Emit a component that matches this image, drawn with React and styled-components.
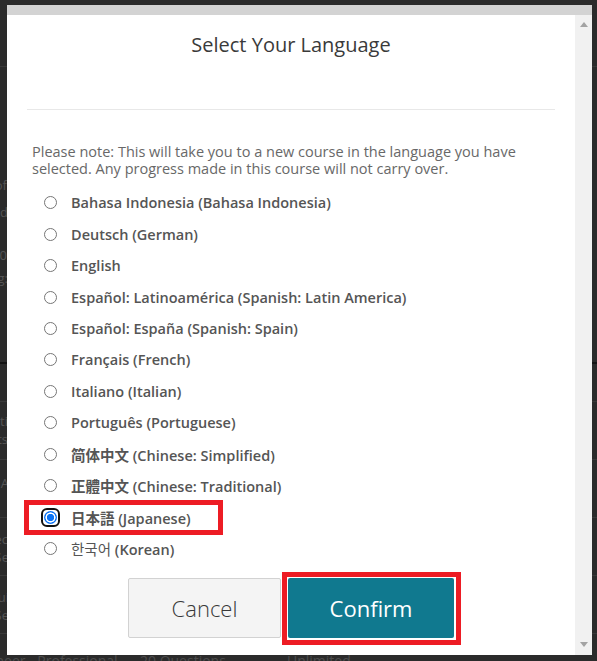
import React from "react";
import styled, { createGlobalStyle } from "styled-components";

const GlobalStyle = createGlobalStyle`
  html, body { margin: 0; padding: 0; background: #2b2b2b; }
  body { font-family: "Open Sans", "Noto Sans", sans-serif; }
  * { box-sizing: border-box; }
`;

const Stage = styled.div`
  position: relative;
  width: 597px;
  height: 661px;
  overflow: hidden;
  background: #2b2b2b;
`;

/* ---------- dimmed page behind the dialog ---------- */
const Backdrop = styled.div`
  display: flex;
  flex-direction: column;
  width: 100%;
`;

const BgRow = styled.div`
  flex: none;
  height: ${(p) => p.$h}px;
  border-bottom: ${(p) => p.$line || "1px solid #3a3a3a"};
  padding-top: ${(p) => p.$pt || 0}px;
  overflow: hidden;
`;

const BgLine = styled.div`
  display: flex;
  justify-content: flex-end;
  width: ${(p) => p.$end}px;
  height: 18px;
  margin-top: ${(p) => p.$mt || 0}px;
  font-size: 13px;
  line-height: 18px;
  color: #555;
  white-space: nowrap;
`;

const BgCols = styled.div`
  display: grid;
  grid-template-columns: 172px 147px 1fr;
  margin-left: -32px;
  font-size: 14px;
  line-height: 20px;
  color: #4c4c4c;
  white-space: nowrap;
`;

const BgCell = styled.span`
  overflow: hidden;
`;

/* ---------- dialog ---------- */
const Modal = styled.div`
  position: absolute;
  left: 7px;
  top: 5px;
  width: 585px;
  height: 650px;
  background: #fff;
  display: flex;
  flex-direction: column;
`;

const TopStrip = styled.div`
  flex: none;
  height: 10px;
  background: #d3d3d3;
`;

const Body = styled.div`
  flex: 1;
  display: flex;
  min-height: 0;
`;

const Content = styled.div`
  flex: 1;
  display: flex;
  flex-direction: column;
`;

const Header = styled.div`
  margin: 0 20px;
  padding: 16px 0 51px;
  border-bottom: 1px solid #e8e8e8;
  text-align: center;
`;

const Title = styled.h2`
  margin: 0;
  font-size: 20px;
  line-height: 27px;
  font-weight: 400;
  color: #3a3a3a;
`;

const Main = styled.div`
  padding: 33px 25px 0;
`;

const Note = styled.p`
  margin: 0;
  font-size: 14.5px;
  line-height: 17px;
  color: #686868;
`;

const List = styled.div`
  margin-top: 10px;
  display: flex;
  flex-direction: column;
`;

const Row = styled.label`
  position: relative;
  height: 31.45px;
  display: flex;
  align-items: center;
`;

const Radio = styled.span`
  position: relative;
  flex: none;
  width: 13px;
  height: 13px;
  margin-left: 12px;
  border-radius: 50%;
  border: ${(p) => (p.$checked ? "none" : "1px solid #767676")};
  background: ${(p) =>
    p.$checked
      ? "radial-gradient(circle, #0a72f5 0 3.4px, #fff 3.9px 4.8px, #0a72f5 5.3px)"
      : "#fff"};

  &::after {
    content: "";
    display: ${(p) => (p.$checked ? "block" : "none")};
    position: absolute;
    inset: -3px;
    border: 2px solid #111;
    border-radius: 6px;
  }
`;

const Label = styled.span`
  margin-left: 14px;
  font-size: 14.5px;
  font-weight: 600;
  color: #555;
  white-space: nowrap;
`;

const Native = styled.span`
  font-family: ${(p) => p.$cjk}, sans-serif;
  font-weight: ${(p) => p.$w || 700};
`;

const Highlight = styled.span`
  position: absolute;
  left: -8px;
  top: -1px;
  width: 199px;
  height: 35px;
  border: 5px solid #ed1c24;
  pointer-events: none;
`;

const Actions = styled.div`
  margin-top: 14px;
  display: flex;
  justify-content: center;
  gap: 7px;
`;

const Button = styled.button`
  position: relative;
  width: ${(p) => p.$w}px;
  height: 60px;
  border-radius: 2px;
  font-family: "Open Sans", sans-serif;
  font-size: 22px;
  font-weight: ${(p) => (p.$primary ? 400 : 300)};
  padding: 0;
  cursor: pointer;
  background: ${(p) => (p.$primary ? "#10798f" : "#f4f4f4")};
  color: ${(p) => (p.$primary ? "#ffffff" : "#383838")};
  border: ${(p) => (p.$primary ? "none" : "1px solid #d2d2d2")};

  &::after {
    content: "";
    display: ${(p) => (p.$marked ? "block" : "none")};
    position: absolute;
    top: -6px;
    left: -6px;
    right: -7px;
    bottom: -7px;
    border: 5px solid #ed1c24;
  }
`;

const Scrollbar = styled.div`
  flex: none;
  width: 17px;
  background: #f1f1f1;
  display: flex;
  flex-direction: column;
  justify-content: space-between;
  align-items: center;
  padding: 7px 0 8px;
`;

const Arrow = ({ down }) => (
  <svg width="8" height="5" viewBox="0 0 8 5">
    <path d={down ? "M0 0H8L4 5Z" : "M0 5H8L4 0Z"} fill="#a3a3a3" />
  </svg>
);

const languages = [
  { label: "Bahasa Indonesia (Bahasa Indonesia)" },
  { label: "Deutsch (German)" },
  { label: "English" },
  { label: "Español: Latinoamérica (Spanish: Latin America)" },
  { label: "Español: España (Spanish: Spain)" },
  { label: "Français (French)" },
  { label: "Italiano (Italian)" },
  { label: "Português (Portuguese)" },
  { native: "简体中文", cjk: '"Noto Sans CJK SC"', label: " (Chinese: Simplified)" },
  { native: "正體中文", cjk: '"Noto Sans CJK TC"', label: " (Chinese: Traditional)" },
  { native: "日本語", cjk: '"Noto Sans CJK JP"', label: " (Japanese)", checked: true },
  { native: "한국어", cjk: '"Noto Sans CJK KR"', w: 400, label: " (Korean)" },
];

export default function App() {
  return (
    <>
      <GlobalStyle />
      <Stage>
        <Backdrop>
          <BgRow $h={67} />
          <BgRow $h={297} $line="2px solid #141414">
            <BgLine $end={7} $mt={109}>Proof</BgLine>
            <BgLine $end={8} $mt={9}>Second</BgLine>
            <BgLine $end={7} $mt={25}>2020</BgLine>
            <BgLine $end={8} $mt={5}>Rating:</BgLine>
          </BgRow>
          <BgRow $h={38} />
          <BgRow $h={58} $pt={10}>
            <BgLine $end={8}>Practi</BgLine>
            <BgLine $end={8}>Tests</BgLine>
          </BgRow>
          <BgRow $h={58} $pt={14}>
            <BgLine $end={9}>AWS A</BgLine>
          </BgRow>
          <BgRow $h={58} $pt={12}>
            <BgLine $end={8}>Spec</BgLine>
            <BgLine $end={9}>Se</BgLine>
          </BgRow>
          <BgRow $h={58} $pt={12}>
            <BgLine $end={9}>Gui</BgLine>
            <BgLine $end={9}>Se</BgLine>
          </BgRow>
          <BgRow $h={40} $pt={17}>
            <BgCols>
              <BgCell>Engineer - Professional</BgCell>
              <BgCell>20 Questions</BgCell>
              <BgCell>Unlimited</BgCell>
            </BgCols>
          </BgRow>
        </Backdrop>

        <Modal>
          <TopStrip />
          <Body>
            <Content>
              <Header>
                <Title>Select Your Language</Title>
              </Header>
              <Main>
                <Note>
                  Please note: This will take you to a new course in the language you have
                  selected. Any progress made in this course will not carry over.
                </Note>
                <List>
                  {languages.map((l, i) => (
                    <Row key={i}>
                      <Radio $checked={l.checked} />
                      <Label>
                        {l.native && (
                          <Native $cjk={l.cjk} $w={l.w}>
                            {l.native}
                          </Native>
                        )}
                        {l.label}
                      </Label>
                      {l.checked && <Highlight />}
                    </Row>
                  ))}
                </List>
                <Actions>
                  <Button $w={153}>Cancel</Button>
                  <Button $w={166} $primary $marked>
                    Confirm
                  </Button>
                </Actions>
              </Main>
            </Content>
            <Scrollbar>
              <Arrow />
              <Arrow down />
            </Scrollbar>
          </Body>
        </Modal>
      </Stage>
    </>
  );
}
